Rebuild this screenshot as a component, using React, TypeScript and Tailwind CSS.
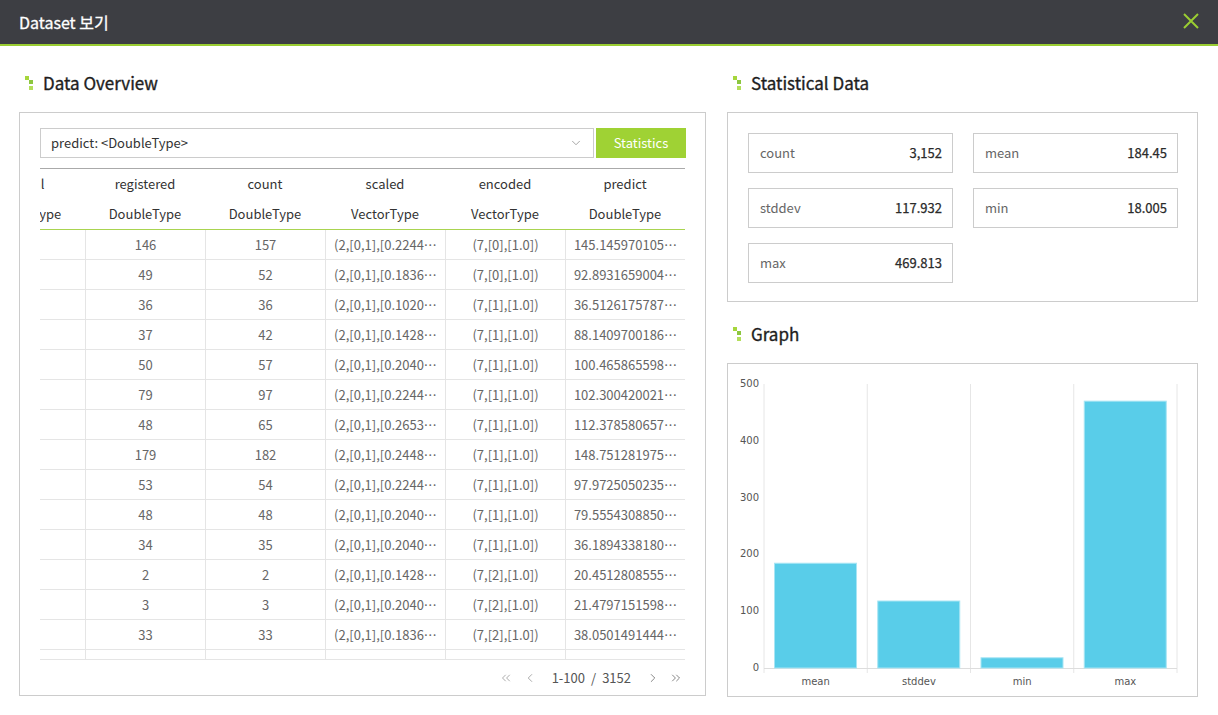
import { ChevronLeft, ChevronRight, ChevronsLeft, ChevronsRight, ChevronDown } from "lucide-react";

const columns = [
  { name: "casual", type: "DoubleType" },
  { name: "registered", type: "DoubleType" },
  { name: "count", type: "DoubleType" },
  { name: "scaled", type: "VectorType" },
  { name: "encoded", type: "VectorType" },
  { name: "predict", type: "DoubleType" },
];

const rows: string[][] = [
  ["11", "146", "157", "(2,[0,1],[0.2244…", "(7,[0],[1.0])", "145.145970105…"],
  ["3", "49", "52", "(2,[0,1],[0.1836…", "(7,[0],[1.0])", "92.8931659004…"],
  ["0", "36", "36", "(2,[0,1],[0.1020…", "(7,[1],[1.0])", "36.5126175787…"],
  ["5", "37", "42", "(2,[0,1],[0.1428…", "(7,[1],[1.0])", "88.1409700186…"],
  ["7", "50", "57", "(2,[0,1],[0.2040…", "(7,[1],[1.0])", "100.465865598…"],
  ["18", "79", "97", "(2,[0,1],[0.2244…", "(7,[1],[1.0])", "102.300420021…"],
  ["17", "48", "65", "(2,[0,1],[0.2653…", "(7,[1],[1.0])", "112.378580657…"],
  ["3", "179", "182", "(2,[0,1],[0.2448…", "(7,[1],[1.0])", "148.751281975…"],
  ["1", "53", "54", "(2,[0,1],[0.2244…", "(7,[1],[1.0])", "97.9725050235…"],
  ["0", "48", "48", "(2,[0,1],[0.2040…", "(7,[1],[1.0])", "79.5554308850…"],
  ["1", "34", "35", "(2,[0,1],[0.2040…", "(7,[1],[1.0])", "36.1894338180…"],
  ["0", "2", "2", "(2,[0,1],[0.1428…", "(7,[2],[1.0])", "20.4512808555…"],
  ["0", "3", "3", "(2,[0,1],[0.2040…", "(7,[2],[1.0])", "21.4797151598…"],
  ["0", "33", "33", "(2,[0,1],[0.1836…", "(7,[2],[1.0])", "38.0501491444…"],
  ["2", "84", "86", "(2,[0,1],[0.1632…", "(7,[2],[1.0])", "60.2214580102…"],
];

const stats = [
  { label: "count", value: "3,152" },
  { label: "mean", value: "184.45" },
  { label: "stddev", value: "117.932" },
  { label: "min", value: "18.005" },
  { label: "max", value: "469.813" },
];

const bars = [
  { label: "mean", value: 184.45 },
  { label: "stddev", value: 117.932 },
  { label: "min", value: 18.005 },
  { label: "max", value: 469.813 },
];

function Bullet() {
  return (
    <svg width="8" height="14" viewBox="0 0 8 14" className="shrink-0">
      <rect x="0" y="0" width="4" height="4" fill="#a6d63c" />
      <rect x="4" y="4" width="4" height="4" fill="#8cc63f" />
      <rect x="4" y="10" width="4" height="4" fill="#b3de5a" />
    </svg>
  );
}

function SectionTitle({ children }: { children: string }) {
  return (
    <h2 className="flex h-6 items-center gap-[10px] pl-[6px] text-[17px] font-normal text-[#1e1e1e] [-webkit-text-stroke:0.35px_#1e1e1e]">
      <Bullet />
      <span>{children}</span>
    </h2>
  );
}

function Graph() {
  const left = 36;
  const right = 449;
  const band = (right - left) / bars.length;
  const base = 304;
  const scale = 284 / 500;
  const ticks = [0, 100, 200, 300, 400, 500];
  return (
    <svg width="469" height="332" className="font-['DejaVu_Sans',Verdana,sans-serif] text-[10px]">
      {[0, 1, 2, 3, 4].map((i) => (
        <line
          key={i}
          x1={left + i * band}
          x2={left + i * band}
          y1={20}
          y2={309}
          stroke="#e6e6e6"
          strokeWidth="1"
        />
      ))}
      <line x1={left} x2={right} y1={base + 0.5} y2={base + 0.5} stroke="#dddddd" />
      {ticks.map((t) => (
        <text key={t} x={31} y={base - t * scale} textAnchor="end" dominantBaseline="middle" fill="#555">
          {t}
        </text>
      ))}
      {bars.map((b, i) => {
        const h = b.value * scale;
        const x = left + i * band + 10.5;
        return (
          <g key={b.label}>
            <rect x={x} y={base - h} width={82} height={h} fill="#59cde9" stroke="#a8e5f4" strokeWidth="1" />
            <text x={left + i * band + band / 2} y={318} textAnchor="middle" dominantBaseline="middle" fill="#555">
              {b.label}
            </text>
          </g>
        );
      })}
    </svg>
  );
}

export default function App() {
  return (
    <div className="w-[1218px] bg-white font-['Noto_Sans_CJK_KR','Noto_Sans',sans-serif] text-[#333]">
      <header className="flex h-[46px] items-center justify-between border-b-2 border-[#9acd32] bg-[#3d3e43] px-[19px]">
        <h1 className="text-[16px] font-normal text-white [-webkit-text-stroke:0.3px_#ffffff]">Dataset 보기</h1>
        <svg width="16" height="16" viewBox="0 0 16 16" className="mt-[-2px]">
          <path d="M1 1 L15 15 M15 1 L1 15" stroke="#9acd32" strokeWidth="2" />
        </svg>
      </header>

      <main className="flex gap-[21px] px-[19px] pb-[18px] pt-[25px]">
        <section className="flex w-[687px] flex-col">
          <SectionTitle>Data Overview</SectionTitle>
          <div className="mt-[17px] border border-[#cccccc] pl-[20px] pr-[19px] pt-[15px]">
            <div className="flex h-[30px] gap-[2px]">
              <div className="flex flex-1 items-center justify-between border border-[#cccccc] pl-[10px] pr-[10px] text-[13px] text-[#333]">
                <span>predict: &lt;DoubleType&gt;</span>
                <ChevronDown size={14} strokeWidth={1.5} className="text-[#999]" />
              </div>
              <button className="w-[90px] bg-[#9fd234] text-[13px] text-white">Statistics</button>
            </div>

            <div className="mt-[10px] overflow-hidden">
              <div className="ml-[-75px] w-[720px]">
                <div className="border-t border-[#aaaaaa]">
                  <div className="flex h-[30px]">
                    {columns.map((c) => (
                      <div key={c.name} className="flex w-[120px] shrink-0 items-center justify-center text-[13px] text-[#333]">
                        {c.name}
                      </div>
                    ))}
                  </div>
                  <div className="flex h-[30px]">
                    {columns.map((c) => (
                      <div key={c.name} className="flex w-[120px] shrink-0 items-center justify-center text-[13px] text-[#333]">
                        {c.type}
                      </div>
                    ))}
                  </div>
                </div>
                <div className="h-[431px] overflow-hidden border-b border-t border-b-[#e5e5e5] border-t-[#a9d450]">
                  {rows.map((r, ri) => (
                    <div key={ri} className="flex h-[30px] border-b border-[#e5e5e5]">
                      {r.map((v, ci) => (
                        <div
                          key={ci}
                          className={
                            ci === 0
                              ? "flex w-[120px] shrink-0 items-center justify-center text-[13px] text-[#666]"
                              : "flex w-[120px] shrink-0 items-center justify-center border-l border-[#e5e5e5] text-[13px] text-[#666]"
                          }
                        >
                          {v}
                        </div>
                      ))}
                    </div>
                  ))}
                </div>
              </div>
            </div>

            <div className="flex h-[35px] items-center justify-end pr-[3px] text-[13px] text-[#555]">
              <ChevronsLeft size={14} strokeWidth={1.2} className="text-[#888]" />
              <ChevronLeft size={14} strokeWidth={1.2} className="ml-[10px] text-[#888]" />
              <span className="ml-[15px]">1-100</span>
              <span className="mx-[6px]">/</span>
              <span>3152</span>
              <ChevronRight size={14} strokeWidth={1.2} className="ml-[15px] text-[#555]" />
              <ChevronsRight size={14} strokeWidth={1.2} className="ml-[9px] text-[#555]" />
            </div>
          </div>
        </section>

        <section className="flex w-[471px] flex-col">
          <SectionTitle>Statistical Data</SectionTitle>
          <div className="mt-[17px] border border-[#cccccc] pb-[18px] pl-[20px] pr-[19px] pt-[20px]">
            <div className="grid grid-cols-2 gap-x-5 gap-y-[15px]">
              {stats.map((s) => (
                <div key={s.label} className="flex h-[40px] items-center justify-between border border-[#cccccc] pl-[11px] pr-[10px] text-[13px]">
                  <span className="text-[#666]">{s.label}</span>
                  <span className="text-[#2a2a2a] [-webkit-text-stroke:0.25px_#2a2a2a]">{s.value}</span>
                </div>
              ))}
            </div>
          </div>

          <div className="mt-[20px]">
            <SectionTitle>Graph</SectionTitle>
          </div>
          <div className="mt-[17px] flex-1 border border-[#cccccc]">
            <Graph />
          </div>
        </section>
      </main>
    </div>
  );
}
